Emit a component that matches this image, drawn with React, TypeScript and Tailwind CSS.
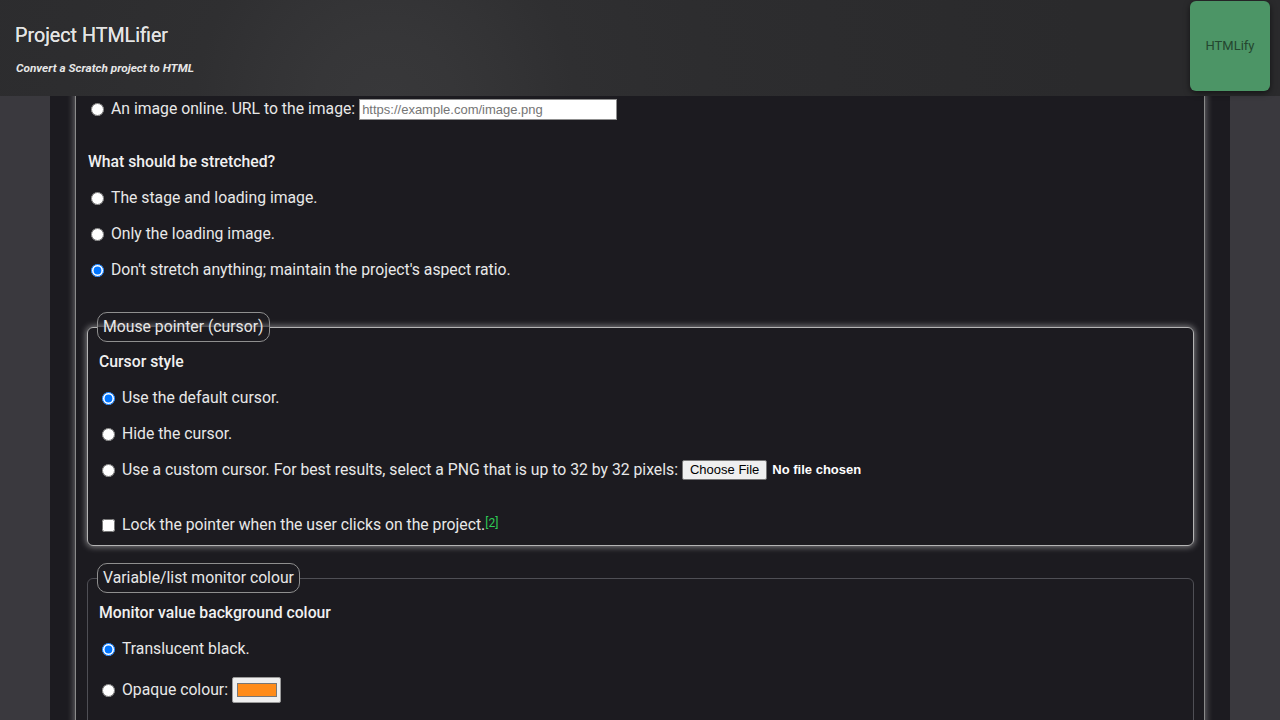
import React from "react";

function Radio({ checked = false, name }: { checked?: boolean; name: string }) {
  return (
    <input
      type="radio"
      name={name}
      defaultChecked={checked}
      className="m-0 ml-[3px] mr-[7px] h-[13px] w-[13px] shrink-0"
    />
  );
}

function Row({ children, className = "" }: { children: React.ReactNode; className?: string }) {
  return <div className={`flex h-[36px] items-center ${className}`}>{children}</div>;
}

export default function App() {
  return (
    <div
      className="relative h-[720px] w-[1280px] overflow-hidden bg-[#3a393e] text-[15.75px] text-[#e8e8e8]"
      style={{ fontFamily: "Roboto, 'Liberation Sans', sans-serif" }}
    >
      {/* fixed header overlay */}
      <header className="absolute left-0 right-0 top-0 z-10 flex h-[96px] items-start justify-between bg-[radial-gradient(circle_at_385px_105px,#38383a_0px,#363638_70px,#333335_125px,#2f2f31_190px,#2d2d2f_320px,#2a2a2c_700px)]">
        <div className="flex flex-col pl-[15px] pt-[24px]">
          <h1 className="text-[19.7px] font-normal leading-[24px] text-[#e4e4e4] [text-shadow:0_0_0.4px_#e4e4e4]">
            Project HTMLifier
          </h1>
          <p className="mt-[13px] pl-[1px] text-[11.8px] font-bold italic leading-[14px] text-[#e6e6e6]">
            Convert a Scratch project to HTML
          </p>
        </div>
        <button className="mr-[10px] mt-[1px] flex h-[90px] w-[80px] items-center justify-center rounded-[6px] bg-[#4c9566] text-[13px] text-[#24462f] shadow-[0_2px_6px_rgba(0,0,0,0.55)]">
          HTMLify
        </button>
      </header>

      <div className="mx-auto h-[720px] w-[1180px] bg-[#1c1b20] px-[25px] pt-[40px]">
        <div className="h-[800px] rounded-[6px] border border-[#8a8a8a] shadow-[0_0_7px_1px_rgba(255,255,255,0.35)] pl-[12px] pr-[10px] pt-[50px]">
          <Row>
            <Radio name="img" />
            <span>An image online. URL to the image:</span>
            <input
              type="text"
              placeholder="https://example.com/image.png"
              className="ml-[4px] h-[21px] w-[258px] border border-[#8f8f8f] bg-white px-[2px] text-[13px] text-black placeholder:text-[#757575]"
              style={{ fontFamily: "'Liberation Sans', Arial, sans-serif" }}
            />
          </Row>

          <Row className="mt-[17px]">
            <span className="font-medium text-[#f0f0f0]">What should be stretched?</span>
          </Row>
          <Row>
            <Radio name="stretch" />
            <span>The stage and loading image.</span>
          </Row>
          <Row>
            <Radio name="stretch" />
            <span>Only the loading image.</span>
          </Row>
          <Row>
            <Radio name="stretch" checked />
            <span>Don't stretch anything; maintain the project's aspect ratio.</span>
          </Row>

          <fieldset className="-ml-[1px] mt-[24px] rounded-[6px] border border-[#b4b4b4] p-0 pb-[2px] pl-[11px] shadow-[0_0_6px_1px_rgba(255,255,255,0.45)]">
            <legend className="-ml-[2px] rounded-[10px] border border-[#8f8f8f] px-[5px] py-[5px] leading-[18px]">
              Mouse pointer (cursor)
            </legend>
            <Row className="mt-[2px]">
              <span className="font-medium text-[#f0f0f0]">Cursor style</span>
            </Row>
            <Row>
              <Radio name="cursor" checked />
              <span>Use the default cursor.</span>
            </Row>
            <Row>
              <Radio name="cursor" />
              <span>Hide the cursor.</span>
            </Row>
            <Row>
              <Radio name="cursor" />
              <span>Use a custom cursor. For best results, select a PNG that is up to 32 by 32 pixels:</span>
              <span
                className="ml-[4px] flex h-[20px] items-center rounded-[2px] border border-[#767676] bg-[#efefef] px-[7px] text-[13px] text-black"
                style={{ fontFamily: "'Liberation Sans', Arial, sans-serif" }}
              >
                Choose File
              </span>
              <span
                className="ml-[5px] text-[13px] font-bold text-white"
                style={{ fontFamily: "'Liberation Sans', Arial, sans-serif" }}
              >
                No file chosen
              </span>
            </Row>
            <Row className="mt-[19px]">
              <input type="checkbox" className="m-0 ml-[3px] mr-[7px] h-[13px] w-[13px]" />
              <span>
                Lock the pointer when the user clicks on the project.
                <sup className="relative -top-[3px] text-[12px] text-[#2ecc55]">[2]</sup>
              </span>
            </Row>
          </fieldset>

          <fieldset className="-ml-[1px] mt-[17px] rounded-[6px] border border-[#4f4f55] p-0 pl-[11px]">
            <legend className="-ml-[2px] rounded-[10px] border border-[#8f8f8f] px-[5px] py-[5px] leading-[18px]">
              Variable/list monitor colour
            </legend>
            <Row className="mt-[2px]">
              <span className="font-medium text-[#f0f0f0]">Monitor value background colour</span>
            </Row>
            <Row>
              <Radio name="mon" checked />
              <span>Translucent black.</span>
            </Row>
            <Row className="mt-[5px]">
              <Radio name="mon" />
              <span>Opaque colour:</span>
              <span className="ml-[4px] flex h-[26px] w-[49px] items-center justify-center rounded-[2px] border border-[#9a9a9a] bg-[#efefef]">
                <span className="block h-[14px] w-[40px] border border-[#777] bg-[#ff8c1a]" />
              </span>
            </Row>
            <div className="h-[120px]" />
          </fieldset>
        </div>
      </div>
    </div>
  );
}
